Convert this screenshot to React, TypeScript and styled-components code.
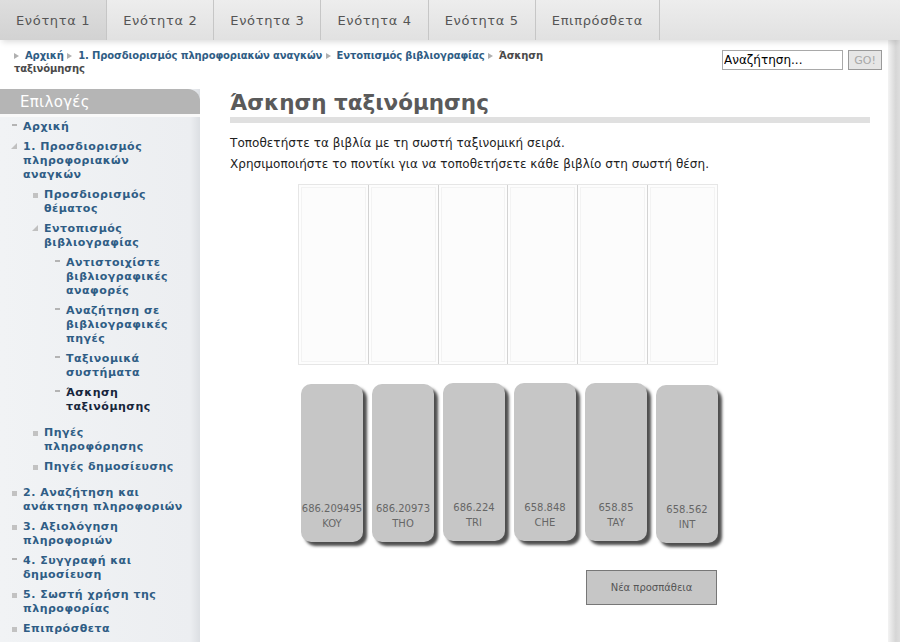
import React from "react";
import styled, { createGlobalStyle, css } from "styled-components";

const GlobalStyle = createGlobalStyle`
  html, body, #root {
    height: 100%;
  }
  body {
    margin: 0;
    background: #ffffff;
    font-family: "DejaVu Sans", Verdana, sans-serif;
  }
`;

type Bullet = "dash" | "square" | "open";

interface MenuItem {
  label: string;
  bullet: Bullet;
  active?: boolean;
  children?: MenuItem[];
}

const tabs = ["Ενότητα 1", "Ενότητα 2", "Ενότητα 3", "Ενότητα 4", "Ενότητα 5", "Επιπρόσθετα"];

const crumbs = [
  "Αρχική",
  "1. Προσδιορισμός πληροφοριακών αναγκών",
  "Εντοπισμός βιβλιογραφίας",
];

const menu: MenuItem[] = [
  { label: "Αρχική", bullet: "dash" },
  {
    label: "1. Προσδιορισμός πληροφοριακών αναγκών",
    bullet: "open",
    children: [
      { label: "Προσδιορισμός θέματος", bullet: "square" },
      {
        label: "Εντοπισμός βιβλιογραφίας",
        bullet: "open",
        children: [
          { label: "Αντιστοιχίστε βιβλιογραφικές αναφορές", bullet: "dash" },
          { label: "Αναζήτηση σε βιβλιογραφικές πηγές", bullet: "dash" },
          { label: "Ταξινομικά συστήματα", bullet: "dash" },
          { label: "Άσκηση ταξινόμησης", bullet: "dash", active: true },
        ],
      },
      { label: "Πηγές πληροφόρησης", bullet: "square" },
      { label: "Πηγές δημοσίευσης", bullet: "square" },
    ],
  },
  { label: "2. Αναζήτηση και ανάκτηση πληροφοριών", bullet: "square" },
  { label: "3. Αξιολόγηση πληροφοριών", bullet: "square" },
  { label: "4. Συγγραφή και δημοσίευση", bullet: "dash" },
  { label: "5. Σωστή χρήση της πληροφορίας", bullet: "square" },
  { label: "Επιπρόσθετα", bullet: "square" },
];

// βιβλία με ταξινομικό αριθμό και κωδικό
const books = [
  { num: "686.209495", code: "KOY", shift: 0 },
  { num: "686.20973", code: "THO", shift: 0 },
  { num: "686.224", code: "TRI", shift: -1 },
  { num: "658.848", code: "CHE", shift: -1 },
  { num: "658.85", code: "TAY", shift: -1 },
  { num: "658.562", code: "INT", shift: 1 },
];

const Page = styled.div`
  width: 900px;
  min-height: 100vh;
  display: flex;
  flex-direction: column;
`;

const Nav = styled.nav`
  position: relative;
  z-index: 2;
  height: 40px;
  display: flex;
  background: linear-gradient(#ededed, #e1e1e1);
  box-shadow: 0 4px 6px -2px rgba(0, 0, 0, 0.14);
`;

const Tab = styled.a<{ $active?: boolean }>`
  display: flex;
  align-items: center;
  padding: 0 16px;
  border-right: 1px solid #c6c6c6;
  font-size: 13px;
  letter-spacing: 0.65px;
  color: #555555;
  text-decoration: none;
  background: ${(p) => (p.$active ? "linear-gradient(#dedede, #d2d2d2)" : "transparent")};
`;

const Row = styled.div`
  flex: 1;
  display: flex;
`;

const Content = styled.div`
  flex: 1;
  display: flex;
  flex-direction: column;
`;

const Gutter = styled.div`
  width: 12px;
  background: linear-gradient(to right, #f3f3f3, #d6d6d6 65%, #dedede);
`;

const TopRow = styled.div`
  height: 49px;
  box-sizing: border-box;
  padding: 9px 6px 0 14px;
  display: flex;
  justify-content: space-between;
  align-items: flex-start;
`;

const Breadcrumb = styled.div`
  width: 545px;
  font-size: 10px;
  font-weight: bold;
  line-height: 13px;
  letter-spacing: -0.12px;
`;

const Crumb = styled.a`
  color: #2f5d85;
  text-decoration: none;
`;

const Current = styled.span`
  color: #4a4a4a;
`;

const Arrow = styled.span`
  display: inline-block;
  width: 0;
  height: 0;
  margin: 0 6px 0 0;
  border-left: 5px solid #b0b0b0;
  border-top: 3.5px solid transparent;
  border-bottom: 3.5px solid transparent;
  vertical-align: 0;
`;

const SearchBox = styled.form`
  display: flex;
  gap: 5px;
  padding-top: 1px;
`;

const SearchInput = styled.input`
  width: 121px;
  height: 20px;
  box-sizing: border-box;
  border: 1px solid #a9a9a9;
  padding: 0 1px;
  font-family: "DejaVu Sans", Verdana, sans-serif;
  font-size: 12px;
  color: #000000;
  outline: none;
`;

const GoButton = styled.button`
  width: 34px;
  height: 20px;
  border: 1px solid #9a9a9a;
  background: #e6e6e6;
  color: #a8a8a8;
  font-family: "DejaVu Sans", Verdana, sans-serif;
  font-size: 11px;
  padding: 0;
`;

const Body = styled.div`
  flex: 1;
  display: flex;
`;

const Sidebar = styled.aside`
  width: 200px;
  background: linear-gradient(to right, #f1f3f5 0%, #eceef1 95%, #dcdfe3 100%);
`;

const SideHeader = styled.div`
  height: 25px;
  display: flex;
  align-items: center;
  padding-left: 20px;
  background: #b5b5b5;
  border-top-right-radius: 12px;
  border-bottom: 3px solid #f9f9f9;
  font-size: 15px;
  color: #ffffff;
  letter-spacing: 0.3px;
`;

const MenuList = styled.ul<{ $level: number }>`
  list-style: none;
  margin: 0;
  padding: 0 0 0 ${(p) => (p.$level === 0 ? 23 : p.$level === 1 ? 21 : 22)}px;
  ${(p) =>
    p.$level === 0 &&
    css`
      padding-right: 15px;
    `}
  ${(p) =>
    p.$level > 0 &&
    css`
      margin-bottom: 6px;
    `}
`;

const MenuLabel = styled.a<{ $active?: boolean }>`
  position: relative;
  display: block;
  padding: 3px 0;
  font-size: 11px;
  font-weight: bold;
  line-height: 14px;
  letter-spacing: 0.5px;
  color: ${(p) => (p.$active ? "#17263c" : "#2f5d85")};
  text-decoration: none;
`;

const Marker = styled.span<{ $kind: Bullet }>`
  position: absolute;
  ${(p) =>
    p.$kind === "dash" &&
    css`
      left: -11px;
      top: 7px;
      width: 5px;
      height: 2px;
      background: #b4b4b4;
    `}
  ${(p) =>
    p.$kind === "square" &&
    css`
      left: -11px;
      top: 8px;
      width: 5px;
      height: 5px;
      background: #c2c2c2;
    `}
  ${(p) =>
    p.$kind === "open" &&
    css`
      left: -12px;
      top: 6px;
      width: 0;
      height: 0;
      border-bottom: 6px solid #c0c0c0;
      border-left: 6px solid transparent;
    `}
`;

const Main = styled.main`
  flex: 1;
  padding: 0 18px 0 30px;
`;

const Title = styled.h1`
  margin: 0;
  font-size: 21.5px;
  font-weight: bold;
  line-height: 28px;
  color: #5a5a5a;
  border-bottom: 6px solid #e0e0e0;
`;

const Intro = styled.div`
  margin-top: 10px;
  font-size: 12px;
  line-height: 21px;
  letter-spacing: 0.05px;
  color: #222222;
`;

const Exercise = styled.div`
  width: 420px;
  margin: 9px 0 0 68px;
  display: flex;
  flex-direction: column;
`;

const DropZone = styled.div`
  height: 181px;
  display: flex;
  box-sizing: border-box;
  border: 1px solid #e6e6e6;
  background: #fcfcfc;
`;

const Slot = styled.div`
  flex: 1;
  border-right: 1px solid #d3d3d3;
  box-shadow: inset 0 0 0 2px #fdfdfd, inset 0 0 0 3px #f3f3f3;
  &:last-child {
    border-right: none;
  }
`;

const Shelf = styled.div`
  display: flex;
  gap: 9px;
  margin: 19px 0 0 3px;
`;

const Book = styled.div<{ $shift: number }>`
  width: 62px;
  height: 158px;
  margin-top: ${(p) => p.$shift}px;
  box-sizing: border-box;
  padding-bottom: 11px;
  display: flex;
  flex-direction: column;
  justify-content: flex-end;
  align-items: center;
  background: #c6c6c6;
  border-radius: 10px;
  box-shadow: 4px 4px 3px #4e4e4e;
  font-size: 10px;
  line-height: 15px;
  color: #666666;
  white-space: nowrap;
`;

const RetryButton = styled.button`
  align-self: flex-end;
  margin: 27px 1px 0 0;
  width: 131px;
  height: 35px;
  border: 1px solid #777777;
  background: #c6c6c6;
  color: #555555;
  font-family: "DejaVu Sans", Verdana, sans-serif;
  font-size: 10px;
`;

const Menu = ({ items, level }: { items: MenuItem[]; level: number }) => (
  <MenuList $level={level}>
    {items.map((item) => (
      <li key={item.label}>
        <MenuLabel href="#" $active={item.active}>
          <Marker $kind={item.bullet} />
          {item.label}
        </MenuLabel>
        {item.children && <Menu items={item.children} level={level + 1} />}
      </li>
    ))}
  </MenuList>
);

const App = () => {
  return (
    <Page>
      <GlobalStyle />
      <Nav>
        {tabs.map((t, i) => (
          <Tab key={t} href="#" $active={i === 0}>
            {t}
          </Tab>
        ))}
      </Nav>

      <Row>
        <Content>
          <TopRow>
            <Breadcrumb>
              {crumbs.map((c) => (
                <React.Fragment key={c}>
                  <Arrow />
                  <Crumb href="#">{c}</Crumb>{" "}
                </React.Fragment>
              ))}
              <Arrow />
              <Current>Άσκηση</Current> <Current>ταξινόμησης</Current>
            </Breadcrumb>
            <SearchBox onSubmit={(e) => e.preventDefault()}>
              <SearchInput defaultValue="Αναζήτηση..." />
              <GoButton type="submit">GO!</GoButton>
            </SearchBox>
          </TopRow>

          <Body>
            <Sidebar>
              <SideHeader>Επιλογές</SideHeader>
              <Menu items={menu} level={0} />
            </Sidebar>

            <Main>
              <Title>Άσκηση ταξινόμησης</Title>
              <Intro>
                Τοποθετήστε τα βιβλία με τη σωστή ταξινομική σειρά.
                <br />
                Χρησιμοποιήστε το ποντίκι για να τοποθετήσετε κάθε βιβλίο στη σωστή θέση.
              </Intro>

              <Exercise>
                <DropZone>
                  {books.map((b) => (
                    <Slot key={b.code} />
                  ))}
                </DropZone>
                <Shelf>
                  {books.map((b) => (
                    <Book key={b.code} $shift={b.shift}>
                      <span>{b.num}</span>
                      <span>{b.code}</span>
                    </Book>
                  ))}
                </Shelf>
                <RetryButton>Νέα προσπάθεια</RetryButton>
              </Exercise>
            </Main>
          </Body>
        </Content>
        <Gutter />
      </Row>
    </Page>
  );
};

export default App;
